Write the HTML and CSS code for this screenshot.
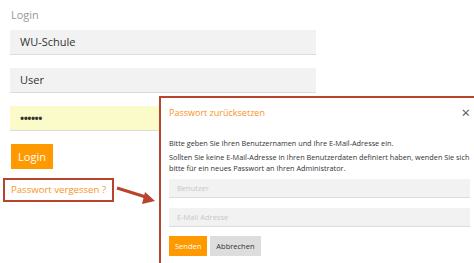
FILE: index.html
```html
<!DOCTYPE html>
<html lang="de">
<head>
    <meta charset="UTF-8">
    <title>Login</title>
    <link rel="stylesheet" href="styles.css">
</head>
<body>
    <main class="login">
        <div class="login-label">Login</div>
        <div class="field">WU-Schule</div>
        <div class="field">User</div>
        <div class="field field-autofill">&bull;&bull;&bull;&bull;&bull;&bull;</div>
        <button class="btn btn-primary login-btn">Login</button>
        <div class="forgot-wrap">
            <a class="forgot" href="#">Passwort vergessen ?</a>
        </div>
    </main>

    <svg class="arrow" width="50" height="24" viewBox="0 0 50 24">
        <line x1="2" y1="3" x2="34" y2="13" stroke="#b8442c" stroke-width="3"/>
        <polygon points="40,16 30,7 27,19" fill="#b8442c"/>
    </svg>

    <div class="modal">
        <div class="modal-header">
            <span class="modal-title">Passwort zurücksetzen</span>
            <span class="modal-close">&times;</span>
        </div>
        <div class="modal-body">
            <p>Bitte geben Sie Ihren Benutzernamen und Ihre E-Mail-Adresse ein.</p>
            <p>Sollten Sie keine E-Mail-Adresse in Ihren Benutzerdaten definiert haben, wenden Sie sich bitte für ein neues Passwort an Ihren Administrator.</p>
            <div class="field field-sm">Benutzer</div>
            <div class="field field-sm">E-Mail Adresse</div>
            <div class="modal-actions">
                <button class="btn btn-primary btn-sm">Senden</button>
                <button class="btn btn-grey btn-sm">Abbrechen</button>
            </div>
        </div>
    </div>
</body>
</html>
```

FILE: styles.css
```css
:root {
    --orange: #ff9900;
    --orange-text: #f7941d;
    --red: #b8442c;
    --field: #f2f2f2;
    --field-line: #dcdcdc;
}

* {
    margin: 0;
    padding: 0;
    box-sizing: border-box;
    font-family: 'Open Sans', sans-serif;
}

body {
    background: #fff;
    color: #333;
    width: 474px;
    height: 263px;
    overflow: hidden;
    position: relative;
}

.login {
    padding: 8px 0 0 10px;
    width: 316px;
}

.login-label {
    font-size: 11px;
    line-height: 14px;
    color: #999;
    margin-bottom: 8px;
    padding-left: 1px;
}

.field {
    height: 25px;
    background: var(--field);
    border-bottom: 1px solid var(--field-line);
    font-size: 11px;
    line-height: 24px;
    padding-left: 10px;
    color: #333;
    margin-bottom: 13px;
}

.field-autofill {
    background: #fbfbc9;
    margin-bottom: 13px;
    letter-spacing: -0.5px;
    font-weight: 700;
}

.btn {
    border: none;
    font-size: 11px;
    color: #fff;
    cursor: pointer;
}

.btn-primary {
    background: var(--orange);
}

.login-btn {
    height: 25px;
    width: 42px;
    margin-left: 1px;
}

.forgot-wrap {
    margin: 7px 0 0 -7px;
}

.forgot {
    display: inline-block;
    border: 2px solid var(--red);
    color: var(--orange-text);
    font-size: 9.6px;
    line-height: 20px;
    padding: 0 6px;
    text-decoration: none;
}

.arrow {
    position: absolute;
    left: 115px;
    top: 185px;
}

.modal {
    position: absolute;
    left: 159px;
    top: 96px;
    right: -10px;
    bottom: -10px;
    background: #fff;
    border: 2px solid var(--red);
    padding: 0 8px 0 8px;
}

.modal-header {
    display: flex;
    justify-content: space-between;
    align-items: center;
    height: 26px;
    padding-top: 2px;
}

.modal-title {
    font-size: 9px;
    color: var(--orange-text);
}

.modal-close {
    font-size: 15px;
    color: #555;
    margin-right: 4px;
    line-height: 1;
}

.modal-body {
    padding-top: 14px;
    font-size: 7.3px;
    line-height: 11px;
    color: #333;
    padding-right: 4px;
}

.modal-body p {
    margin-bottom: 3px;
}

.field-sm {
    height: 19px;
    line-height: 18px;
    font-size: 7.5px;
    color: #c8c8c8;
    padding-left: 8px;
    margin-top: 5px;
    margin-bottom: 0;
}

.field-sm + .field-sm {
    margin-top: 10px;
}

.modal-actions {
    display: flex;
    gap: 3px;
    margin-top: 9px;
}

.btn-sm {
    height: 20px;
    font-size: 7.5px;
    padding: 0 6px;
}

.btn-grey {
    background: #ddd;
    color: #333;
}
```
